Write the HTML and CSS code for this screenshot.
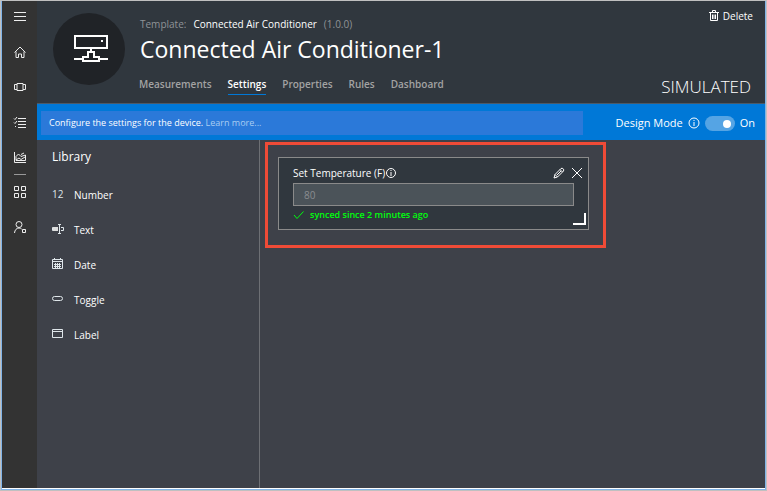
FILE: index.html
```html
<!DOCTYPE html>
<html lang="en">
<head>
<meta charset="utf-8">
<meta name="viewport" content="width=device-width, initial-scale=1">
<title>Connected Air Conditioner-1</title>
<link rel="stylesheet" href="styles.css">
</head>
<body>
<div class="window">
  <nav class="rail" aria-label="Main">
    <button class="rail-item" type="button" aria-label="Menu"><svg viewBox="0 0 14 14"><path d="M1 2.500h12M1 6.500h12M1 10.500h12"/></svg></button>
    <a class="rail-item" href="#home" aria-label="Home"><svg viewBox="0 0 14 14"><path d="M1.500 7.500 7 2l5.500 5.500M3 6.500v6h2.500V9h3v3.500H11v-6"/></svg></a>
    <a class="rail-item" href="#explorer" aria-label="Explorer"><svg viewBox="0 0 14 14"><path d="M4 3.500h6v7H4zM4 4.500H1.500v5H4M10 4.500h2.500v5H10"/></svg></a>
    <a class="rail-item" href="#sets" aria-label="Device sets"><svg viewBox="0 0 14 14"><path d="M5 3.500h8M5 6.500h8M5 9.500h8M5 12.500h8M1 3.500l1 1 2-2.500M1 7.500l1 1 2-2.500M2 11.500h1"/></svg></a>
    <a class="rail-item" href="#analytics" aria-label="Analytics"><svg viewBox="0 0 14 14"><path d="M1.500 2v10.500H13M3 10.500V6.500L5.500 4 8 6.500 12.500 5v5.500zM3 10l3-2 2 1.500L12 7M8 4.500l3-1.500"/></svg></a>
    <hr class="rail-line">
    <a class="rail-item" href="#builder" aria-label="Application builder"><svg viewBox="0 0 14 14"><path d="M1.500 1.500h4v4h-4zM8.500 1.500h4v4h-4zM1.500 8.500h4v4h-4zM8.500 8.500h4v4h-4z"/></svg></a>
    <a class="rail-item" href="#admin" aria-label="Administration"><svg viewBox="0 0 14 14"><circle cx="6" cy="4.500" r="3"/><path d="M1.500 13c.3-3 2-5 4.500-5 1 0 2 .4 2.600 1M9.500 9.500h3v3h-3z"/></svg></a>
  </nav>
  <div class="page">
    <header class="header">
      <div class="avatar">
        <svg viewBox="0 0 40 30" aria-hidden="true"><path d="M6 2h32v12H6zM22 14v4M5 25h9M30 25h9M14 23h5v-5h6v5h5v4H14z"/><path class="dot" d="M32 6h2v2h-2z"/></svg>
      </div>
      <div class="identity">
        <p class="template"><span>Template:</span><a href="#template">Connected Air Conditioner</a><span>(1.0.0)</span></p>
        <h1>Connected Air Conditioner-1</h1>
        <nav class="tabs" aria-label="Device">
          <a href="#measurements">Measurements</a>
          <a href="#settings" class="current" aria-current="page">Settings</a>
          <a href="#properties">Properties</a>
          <a href="#rules">Rules</a>
          <a href="#dashboard">Dashboard</a>
        </nav>
      </div>
      <div class="status">
        <button class="delete" type="button"><svg viewBox="0 0 10 12" aria-hidden="true"><path d="M0 2.500h10M3.500 2V.5h3V2M1.500 2.500v8h7v-8M3.500 4.500V9M5 4.500V9M6.500 4.500V9"/></svg>Delete</button>
        <span class="simulated">SIMULATED</span>
      </div>
    </header>
    <div class="banner">
      <p class="message"><strong>Configure the settings for the device.</strong> <a href="#learn">Learn more...</a></p>
      <div class="mode">
        <label for="design">Design Mode</label>
        <svg class="info" viewBox="0 0 12 12" aria-hidden="true"><circle cx="6" cy="6" r="5"/><path d="M6 3v1M6 5v4"/></svg>
        <input id="design" class="switch" type="checkbox" role="switch" checked>
        <span>On</span>
      </div>
    </div>
    <div class="content">
      <aside class="library">
        <h2>Library</h2>
        <ul>
          <li><button type="button"><span class="digits">12</span>Number</button></li>
          <li><button type="button"><svg viewBox="0 0 12 12" aria-hidden="true"><path d="M6 4.500H.5v3H6M9 4.500h2.500v3H9M6 1.500h3M6 10.500h3M7.500 1.500v9"/><path class="fill" d="M1 4h5v4H1z"/></svg>Text</button></li>
          <li><button type="button"><svg viewBox="0 0 12 12" aria-hidden="true"><path d="M.5 1.500h10v9H.5zM.5 3.500h10M2.500 0v2M8.500 0v2M2 6.500h7M2 8.500h7M3.500 5v5M5.500 5v5M7.500 5v5"/></svg>Date</button></li>
          <li><button type="button"><svg viewBox="0 0 12 12" aria-hidden="true"><rect x=".5" y="3.500" width="10" height="4" rx="2"/></svg>Toggle</button></li>
          <li><button type="button"><svg viewBox="0 0 12 12" aria-hidden="true"><path d="M.5 1.500h10v8H.5zM.5 3.500h10"/></svg>Label</button></li>
        </ul>
      </aside>
      <main class="canvas">
        <div class="highlight">
          <section class="card">
            <div class="card-head">
              <label for="temperature">Set Temperature (F)</label>
              <svg class="info" viewBox="0 0 12 12" aria-hidden="true"><circle cx="6" cy="6" r="4.500"/><path d="M6 3v1M6 5v4"/></svg>
              <div class="tools">
                <button type="button" aria-label="Edit"><svg viewBox="0 0 12 12"><path d="M1 11l1-3.500 6-6c1.500-1 3.500 1 2.500 2.500l-6 6zM7 2.500 9.500 5M2 7.500 4.500 10M4 8l4-4"/></svg></button>
                <button type="button" aria-label="Remove"><svg class="cross" viewBox="0 0 12 12"><path d="M1 1l10 10M11 1 1 11"/></svg></button>
              </div>
            </div>
            <input id="temperature" class="value" type="text" placeholder="80">
            <p class="synced"><svg viewBox="0 0 12 12" aria-hidden="true"><path d="M1 6l3 3.500 6.500-7"/></svg>synced since 2 minutes ago</p>
            <span class="grip"></span>
          </section>
        </div>
      </main>
    </div>
  </div>
</div>
</body>
</html>
```
FILE: styles.css
```css
* { box-sizing: border-box; }

body {
  margin: 0;
  padding: 1px;
  background: #c0c0c0;
  color: #fff;
  font: 10px/14px "Open Sans", "Noto Sans", sans-serif;
}

h1, h2, p, ul { margin: 0; padding: 0; font-weight: 400; }
ul { list-style: none; }
a { color: inherit; text-decoration: none; }
button {
  padding: 0;
  border: 0;
  background: none;
  color: inherit;
  font: inherit;
}
svg {
  display: block;
  flex: none;
  width: 12px;
  height: 12px;
  fill: none;
  stroke: currentColor;
}

.window {
  display: flex;
  min-height: calc(100vh - 2px);
  border: 1px solid #82b4e8;
  border-top: 0;
  background: linear-gradient(#fff, #fff) bottom / 100% 1px no-repeat;
  padding-bottom: 1px;
}

/* Navigation rail */
.rail {
  display: flex;
  flex-direction: column;
  flex: none;
  width: 35px;
  background: #333;
}
.rail-item {
  display: grid;
  place-items: center;
  height: 35px;
  color: #eee;
}
.rail-item:first-child { height: 31px; margin-bottom: 2px; }
.rail-item svg { width: 14px; height: 14px; }
.rail-line {
  width: 12px;
  height: 1px;
  margin: 0 auto -1px;
  border: 0;
  background: #999;
}

.page {
  display: flex;
  flex: 1;
  flex-direction: column;
  min-width: 0;
  background: #3e4149;
}

/* Device header */
.header {
  display: flex;
  height: 103px;
  padding: 0 12px 0 16px;
  border-bottom: 1px solid #4b5a68;
  background: #30373e;
}
.avatar {
  display: grid;
  place-items: center;
  flex: none;
  width: 72px;
  height: 72px;
  margin: 12px 14px 0 0;
  border-radius: 50%;
  background: #202327;
}
.avatar svg { width: 40px; height: 30px; stroke-width: 2; }
.avatar .dot { fill: #fff; stroke: none; }
.identity { flex: 1; padding-top: 16px; }
.template, h1 { padding-left: 1px; }
.template { display: flex; gap: 7px; color: #8f9397; }
.template a { color: #fff; }
h1 { font-size: 23px; line-height: 36px; }
.tabs {
  display: flex;
  gap: 16px;
  margin-top: 10px;
  color: #a3a3a3;
  font-weight: 600;
}
.tabs a { padding-bottom: 3px; border-bottom: 1px solid transparent; }
.tabs .current { border-color: #0078d7; color: #fff; }
.status {
  display: flex;
  flex-direction: column;
  align-items: flex-end;
  justify-content: space-between;
  padding: 8px 0 4px;
}
.delete { display: flex; align-items: center; gap: 4px; }
.delete svg { width: 10px; }
.simulated { padding-right: 2px; font-size: 17px; line-height: 24px; font-weight: 300; }

/* Blue banner */
.banner {
  display: flex;
  align-items: center;
  justify-content: space-between;
  height: 36px;
  padding: 2px 10px 0 4px;
  background: #0078d7;
}
.message {
  flex: 0 1 542px;
  padding: 5px 8px;
  background: #2b79d9;
  color: #a9cdf2;
  font-size: 9px;
}
.message strong { color: #fff; font-weight: 400; }
.mode { display: flex; align-items: center; gap: 5px; font-size: 11px; }
.switch {
  appearance: none;
  display: flex;
  width: 30px;
  height: 15px;
  margin: 0;
  padding: 4px;
  border-radius: 8px;
  background: #55a4e4;
}
.switch::before {
  content: "";
  width: 8px;
  height: 8px;
  border-radius: 50%;
  background: #fff;
}
.switch:checked { justify-content: flex-end; }

/* Library and canvas */
.content { display: flex; flex: 1; }
.library {
  flex: none;
  width: 223px;
  padding: 8px 15px;
  border-right: 1px solid #6d6f74;
}
h2 { font-size: 12px; line-height: 18px; }
.library ul { display: grid; margin-top: 11px; }
.library button {
  display: grid;
  grid-template-columns: 22px auto;
  align-items: center;
  height: 35px;
  text-align: left;
}
.library svg, .digits { margin-bottom: 2px; color: #dfe6ea; }
.library .fill { fill: #ddd; stroke: none; }
.canvas { flex: 1; padding: 2px 5px; }
.highlight {
  width: 341px;
  max-width: 100%;
  padding: 12px 14px 15px 10px;
  border: 3px solid #f04b37;
}
.card {
  position: relative;
  padding: 7px 14px;
  border: 1px solid #8a8a8a;
  background: #30373e;
}
.card-head { display: flex; align-items: center; height: 16px; }
.tools { display: flex; gap: 6px; margin: 0 -9px 0 auto; }
.value {
  display: block;
  width: 100%;
  height: 23px;
  margin: 2px 0;
  padding: 0 10px;
  border: 1px solid #8a8a8a;
  border-radius: 0;
  background: #4b5359;
  color: #fff;
  font: inherit;
}
.value::placeholder { color: #8a8d90; opacity: 1; }
.synced {
  display: flex;
  align-items: center;
  gap: 5px;
  color: #00ff0d;
  font-size: 9px;
  font-weight: 600;
}
.grip {
  position: absolute;
  right: 2px;
  bottom: 4px;
  width: 13px;
  height: 12px;
  border: solid #fff;
  border-width: 0 2px 2px 0;
}
```
